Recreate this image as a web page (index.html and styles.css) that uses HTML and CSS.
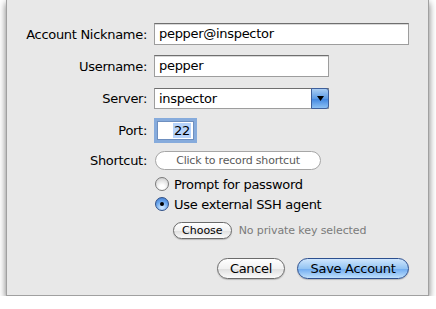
FILE: index.html
```html
<!DOCTYPE html>
<html lang="en">
<head>
  <meta charset="UTF-8">
  <title>Edit Account</title>
  <link rel="stylesheet" href="styles.css">
</head>
<body>
  <!-- Account sheet -->
  <div class="sheet">
    <div class="form">
      <div class="label">Account Nickname:</div>
      <div class="text-field wide">pepper@inspector</div>

      <div class="label">Username:</div>
      <div class="text-field medium">pepper</div>

      <div class="label">Server:</div>
      <div class="popup">
        <span class="popup-value">inspector</span>
        <span class="popup-arrow">
          <svg width="7" height="5" viewBox="0 0 7 5"><path d="M0 0 H7 L3.5 5 Z" fill="#000"/></svg>
        </span>
      </div>

      <div class="label">Port:</div>
      <div class="text-field port"><span class="selected">22</span></div>

      <div class="label">Shortcut:</div>
      <div class="shortcut">Click to record shortcut</div>

      <!-- Authentication options -->
      <div class="options">
        <div class="radio-row">
          <span class="radio"></span>
          <span>Prompt for password</span>
        </div>
        <div class="radio-row">
          <span class="radio checked"></span>
          <span>Use external SSH agent</span>
        </div>
        <div class="key-row">
          <button class="button small">Choose</button>
          <span class="key-note">No private key selected</span>
        </div>
      </div>
    </div>

    <!-- Bottom buttons -->
    <div class="actions">
      <button class="button">Cancel</button>
      <button class="button default">Save Account</button>
    </div>
  </div>
</body>
</html>
```

FILE: styles.css
```css
/* General Styles */
body {
  margin: 0;
  background: #ffffff;
  font-family: 'DejaVu Sans', 'Liberation Sans', sans-serif;
  font-size: 13px;
  letter-spacing: -0.3px;
  color: #000000;
}

/* Sheet panel */
.sheet {
  margin-left: 6px;
  width: 421px;
  height: 295px;
  background-color: #e8e8e8;
  border: 1px solid #a0a0a0;
  border-top: none;
  box-shadow: 0 3px 7px rgba(0, 0, 0, 0.55);
}

/* Label / control grid */
.form {
  display: grid;
  grid-template-columns: 140px 1fr;
  grid-template-rows: 32px 32px 32px 32px 28px auto;
  column-gap: 7px;
  align-items: center;
  padding: 18px 19px 0 0;
}

.label {
  text-align: right;
}

/* Text fields */
.text-field {
  box-sizing: border-box;
  height: 22px;
  padding: 0 4px;
  line-height: 20px;
  background: #ffffff;
  border: 1px solid #9d9d9d;
  border-top-color: #6f6f6f;
  box-shadow: inset 0 1px 0 #d8d8d8;
  white-space: nowrap;
}

.text-field.wide {
  width: 255px;
}

.text-field.medium {
  width: 175px;
}

.text-field.port {
  width: 37px;
  height: 19px;
  line-height: 17px;
  margin-left: 3px;
  text-align: right;
  padding: 0 2px;
  border-color: #6e8fbf;
  box-shadow: 0 0 0 3px #86abdc; /* Focus ring */
}

.selected {
  background-color: #b6d3fb;
  padding: 0 1px;
}

/* Popup button */
.popup {
  box-sizing: border-box;
  display: flex;
  width: 175px;
  height: 21px;
  background: #ffffff;
  border: 1px solid #9d9d9d;
  border-top-color: #6f6f6f;
}

.popup-value {
  flex: 1;
  padding-left: 4px;
  line-height: 19px;
}

.popup-arrow {
  width: 16px;
  margin: -1px -1px -1px 0;
  display: flex;
  align-items: center;
  justify-content: center;
  border: 1px solid #3e5f9c;
  border-radius: 0 3px 3px 0;
  background: linear-gradient(#a9cdf3, #5d9be4 50%, #3f84df 51%, #8cc0f4);
}

/* Shortcut recorder */
.shortcut {
  box-sizing: border-box;
  width: 166px;
  height: 19px;
  margin-left: 1px;
  border: 1px solid #a6a6a6;
  border-radius: 10px;
  background: #ffffff;
  color: #5a5a5a;
  font-size: 11px;
  letter-spacing: -0.2px;
  line-height: 17px;
  text-align: center;
}

/* Radio options */
.options {
  grid-column: 2;
  display: flex;
  flex-direction: column;
}

.radio-row {
  display: flex;
  align-items: center;
  gap: 5px;
  height: 20px;
  margin-left: 1px;
}

.radio {
  box-sizing: border-box;
  width: 14px;
  height: 14px;
  border-radius: 50%;
  border: 1px solid #7a7a7a;
  background: radial-gradient(circle at 50% 75%, #ffffff 20%, #dcdcdc 70%, #c4c4c4);
  display: flex;
  align-items: center;
  justify-content: center;
}

.radio.checked {
  border-color: #2f4f86;
  background: radial-gradient(circle at 50% 80%, #c6e2ff 10%, #6aa6ec 55%, #3a74c9);
}

.radio.checked::after {
  content: "";
  width: 4px;
  height: 4px;
  border-radius: 50%;
  background: #000000;
}

.key-row {
  display: flex;
  align-items: center;
  gap: 7px;
  height: 20px;
  margin: 6px 0 0 19px;
}

.key-note {
  color: #7b7b7b;
  font-size: 11px;
  letter-spacing: -0.1px;
}

/* Aqua buttons */
.button {
  box-sizing: border-box;
  height: 21px;
  padding: 0 16px;
  font-family: inherit;
  font-size: 13px;
  letter-spacing: -0.3px;
  color: #000000;
  border: 1px solid #6b6b6b;
  border-radius: 11px;
  background: linear-gradient(#ffffff, #f1f1f1 50%, #dedede 51%, #fbfbfb);
  box-shadow: 0 1px 1px rgba(0, 0, 0, 0.2);
}

.button.small {
  height: 17px;
  padding: 0 8px;
  font-size: 11px;
  letter-spacing: 0;
  border-radius: 9px;
}

.button.default {
  border-color: #2c4f8f;
  background: linear-gradient(#cfe6fd, #94c4f3 50%, #6eaaf0 51%, #bfe0fc);
}

.actions {
  display: flex;
  justify-content: flex-end;
  gap: 12px;
  margin-top: 18px;
  padding-right: 19px;
}

.actions .button {
  width: 68px;
  padding: 0;
}

.actions .button.default {
  width: 112px;
}
```
